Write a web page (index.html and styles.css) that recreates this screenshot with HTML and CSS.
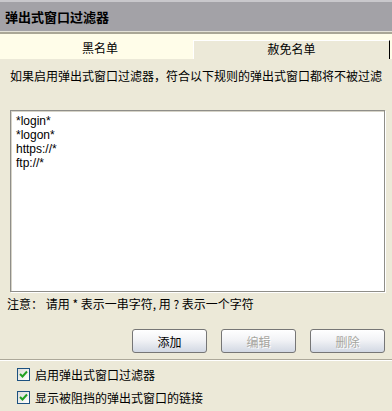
FILE: index.html
```html
<!DOCTYPE html>
<html lang="zh-CN">
<head>
    <meta charset="UTF-8">
    <title>弹出式窗口过滤器</title>
    <link rel="stylesheet" href="styles.css">
</head>
<body>
    <div class="titlebar">弹出式窗口过滤器</div>
    <div class="divider"></div>
    <div class="tabs">
        <div class="tab first">黑名单</div>
        <div class="tab second">赦免名单</div>
    </div>

    <div class="panel">
        <p class="desc">如果启用弹出式窗口过滤器，符合以下规则的弹出式窗口都将不被过滤</p>
        <div class="rules">
            <div>*login*</div>
            <div>*logon*</div>
            <div>https://*</div>
            <div>ftp://*</div>
        </div>
        <p class="note">注意： 请用 * 表示一串字符, 用 ? 表示一个字符</p>
        <div class="buttons">
            <button class="button">添加</button>
            <button class="button" disabled>编辑</button>
            <button class="button" disabled>删除</button>
        </div>
    </div>

    <div class="options">
        <label class="option"><span class="check"><svg width="9" height="9" viewBox="0 0 9 9"><path d="M1 4 L3.5 6.5 L8 1.5" fill="none" stroke="#21a121" stroke-width="2"/></svg></span>启用弹出式窗口过滤器</label>
        <label class="option"><span class="check"><svg width="9" height="9" viewBox="0 0 9 9"><path d="M1 4 L3.5 6.5 L8 1.5" fill="none" stroke="#21a121" stroke-width="2"/></svg></span>显示被阻挡的弹出式窗口的链接</label>
    </div>
</body>
</html>
```

FILE: styles.css
```css
body {
    margin: 0;
    padding: 0;
    width: 392px;
    height: 411px;
    overflow: hidden;
    background-color: #ece9d8;
    font-family: "Liberation Sans", "Noto Sans CJK SC", sans-serif;
    font-size: 12px;
    color: #000;
}

.titlebar {
    height: 29px;
    border-top: 2px solid #c9c8cc;
    background-color: #a3a2a7;
    padding-left: 5px;
    font-family: "Noto Sans CJK SC", sans-serif;
    font-weight: bold;
    font-size: 13px;
    line-height: 29px;
    box-sizing: content-box;
}

.divider {
    height: 1px;
    background-color: #e4e2d8;
    border-bottom: 2px solid #aaa796;
}

.tabs {
    display: flex;
    height: 25px;
    background-color: #fffde9;
}
.tab {
    font-family: "Noto Sans CJK SC", sans-serif;
    text-align: center;
    box-sizing: border-box;
}
.tab.first {
    width: 193px;
    padding-left: 7px;
    line-height: 27px;
}
.tab.second {
    flex: 1;
    margin-top: 6px;
    margin-right: 2px;
    background-color: #ece9d8;
    border-top: 1px solid #fff;
    border-left: 1px solid #fff;
    border-right: 1px solid #000;
    line-height: 16px;
}

.panel {
    padding: 0 6px 0 10px;
}
.desc {
    margin: 11px 0 0;
    height: 12px;
    line-height: 12px;
    font-family: "Noto Sans CJK SC", sans-serif;
    white-space: nowrap;
}
.rules {
    margin-top: 28px;
    height: 171px;
    width: 362px;
    background-color: #fff;
    border: 1px solid #8f8e89;
    box-shadow: inset 1px 1px 0 #d6d3c7, 1px 1px 0 #fff;
    padding: 3px 6px 6px 5px;
    line-height: 14px;
    font-family: "Liberation Sans", sans-serif;
    font-size: 12px;
}
.note {
    margin: 6px 0 0 -3px;
    height: 12px;
    line-height: 12px;
    font-family: "Noto Sans CJK SC", sans-serif;
    white-space: nowrap;
}

.buttons {
    display: flex;
    justify-content: flex-end;
    gap: 14px;
    margin-top: 19px;
    padding-right: 1px;
}
.button {
    width: 75px;
    height: 24px;
    padding: 0;
    border: 1px solid #767676;
    border-radius: 3px;
    background: linear-gradient(#ffffff, #f2f3f6 45%, #d2d8e3);
    font-family: "Noto Sans CJK SC", sans-serif;
    font-size: 12px;
    color: #000;
}
.button:disabled {
    color: #a7a6a0;
    text-shadow: 1px 1px 0 #fff;
}

.options {
    margin-top: 6px;
    border-top: 1px solid #aca899;
    box-shadow: inset 0 1px 0 #fff;
    padding: 8px 0 0 17px;
}
.option {
    display: flex;
    align-items: center;
    height: 13px;
    margin-bottom: 10px;
    font-family: "Noto Sans CJK SC", sans-serif;
}
.check {
    display: flex;
    align-items: center;
    justify-content: center;
    width: 11px;
    height: 11px;
    margin-right: 5px;
    border: 1px solid #1c5180;
    background: linear-gradient(135deg, #dcdcd7, #ffffff);
}
```
